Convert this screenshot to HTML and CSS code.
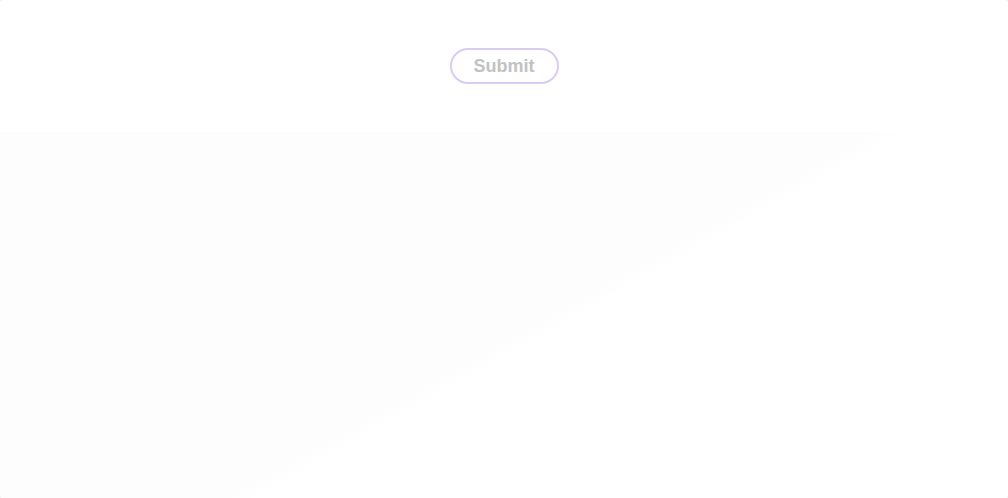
FILE: index.html
```html
<!DOCTYPE html>
<html lang="en">
<head>
<meta charset="utf-8">
<title>Submit</title>
<link rel="stylesheet" href="styles.css">
</head>
<body>
  <main class="card">
    <section class="actions">
      <button class="submit-btn" type="button" disabled>Submit</button>
    </section>
    <section class="panel"></section>
  </main>
</body>
</html>
```

FILE: styles.css
```css
html, body {
  margin: 0;
  padding: 0;
  height: 100%;
  background: #f0f0f0;
}

.card {
  display: flex;
  flex-direction: column;
  height: 498px;
  background: #ffffff;
  border-radius: 3px;
  overflow: hidden;
  font-family: "Liberation Sans", Arial, sans-serif;
}

.actions {
  height: 132px;
  display: flex;
  justify-content: center;
  align-items: flex-start;
  padding-top: 48px;
  box-sizing: border-box;
}

.submit-btn {
  font-family: "Liberation Sans", Arial, sans-serif;
  font-size: 18px;
  font-weight: 700;
  line-height: 20px;
  color: #c2c2c2;
  background: #ffffff;
  border: 2px solid #d9ccf3;
  border-radius: 18px;
  padding: 6px 22px;
  height: 36px;
  box-sizing: border-box;
  cursor: default;
}

.panel {
  flex: 1;
  background: linear-gradient(150.6deg, #fdfdfd 0%, #fdfdfd 52.5%, #ffffff 55%, #ffffff 100%);
}
```
